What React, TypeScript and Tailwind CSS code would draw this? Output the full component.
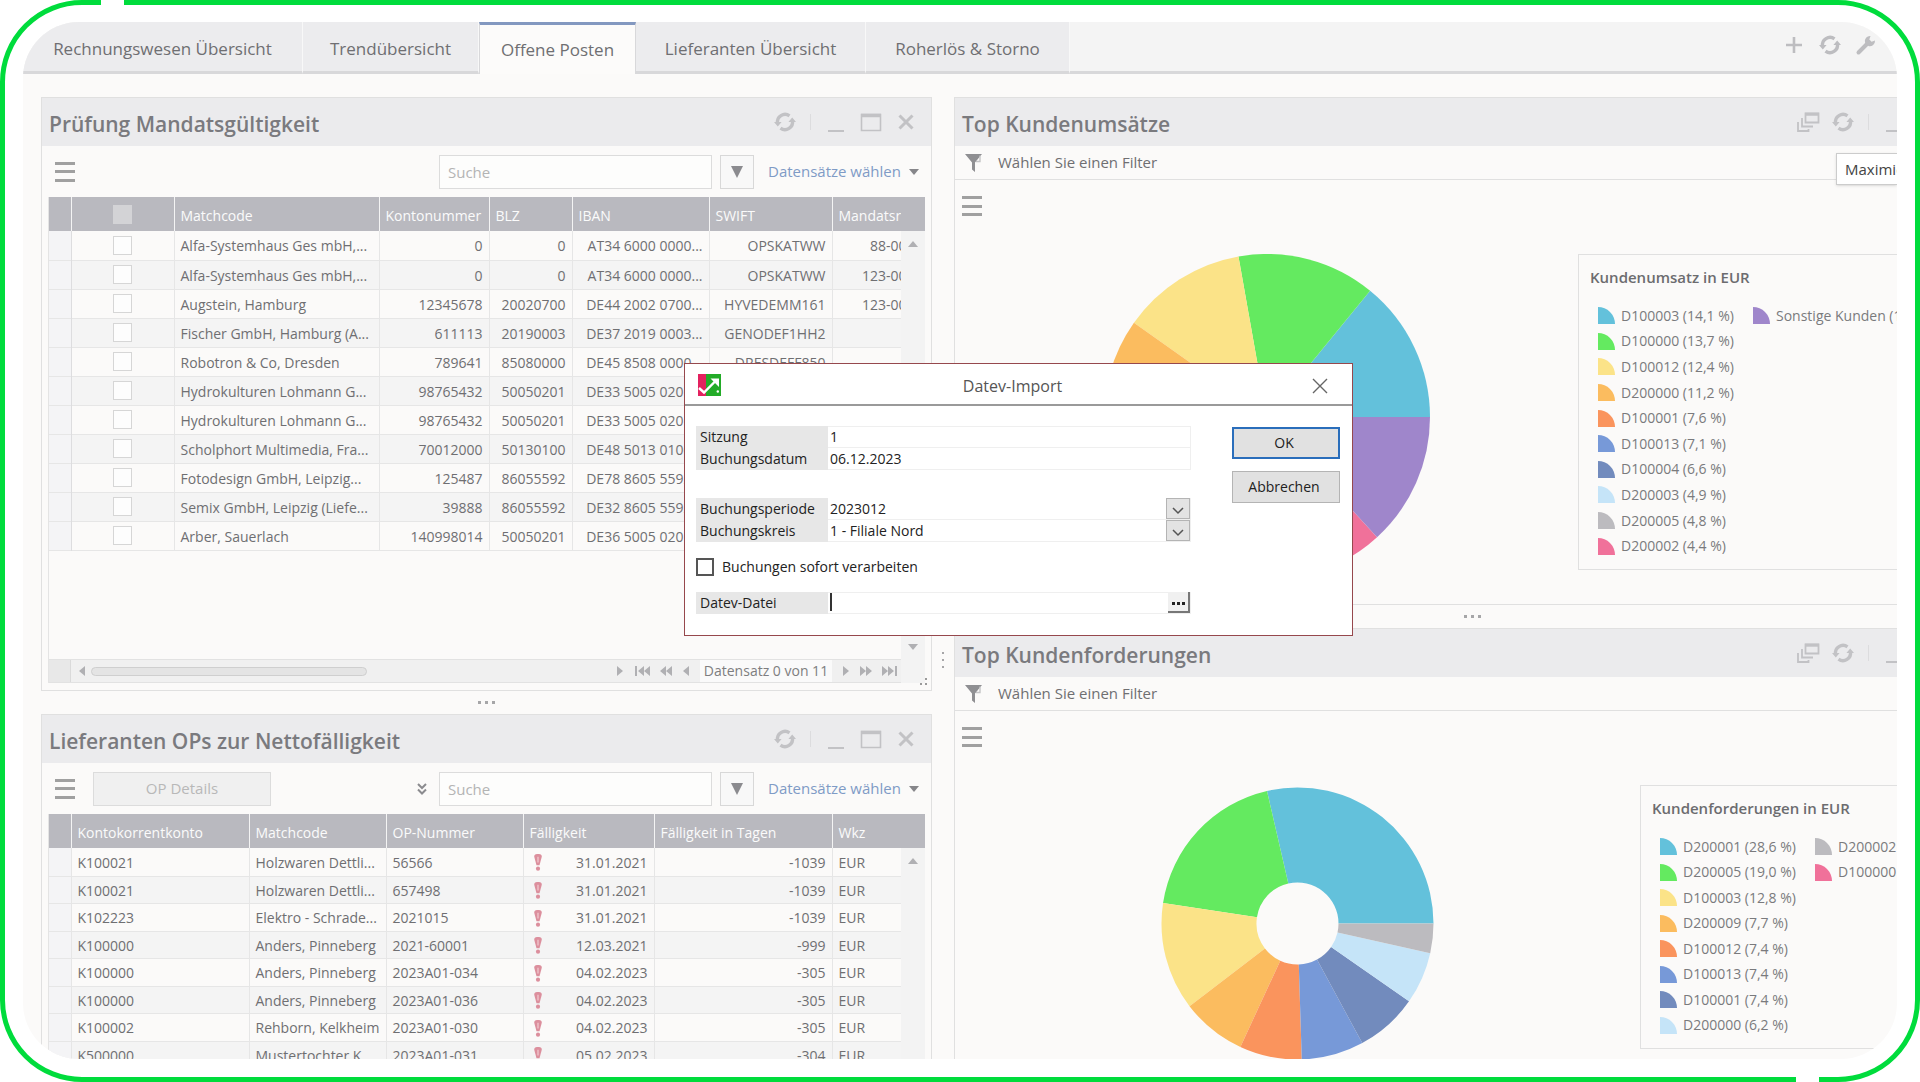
import { useState } from "react";
import type { ReactNode } from "react";

type Slice = { label: string; value: number; color: string };

const TABS = [
  { label: "Rechnungswesen Übersicht", width: "w-[280px]" },
  { label: "Trendübersicht", width: "w-[176px]" },
  { label: "Offene Posten", width: "w-[157px]" },
  { label: "Lieferanten Übersicht", width: "w-[230px]" },
  { label: "Roherlös & Storno", width: "w-[204px]" },
];

const MANDATE_COLUMNS = [
  { label: "Matchcode", width: "w-[205px]" },
  { label: "Kontonummer", width: "w-[110px]" },
  { label: "BLZ", width: "w-[83px]" },
  { label: "IBAN", width: "w-[137px]" },
  { label: "SWIFT", width: "w-[123px]" },
  { label: "Mandatsreferenz", width: "w-[129px]" },
];

const MANDATES = [
  ["Alfa-Systemhaus Ges mbH,...", "0", "0", "AT34 6000 0000...", "OPSKATWW", "88-00000001"],
  ["Alfa-Systemhaus Ges mbH,...", "0", "0", "AT34 6000 0000...", "OPSKATWW", "123-00000001"],
  ["Augstein, Hamburg", "12345678", "20020700", "DE44 2002 0700...", "HYVEDEMM161", "123-00000002"],
  ["Fischer GmbH, Hamburg (A...", "611113", "20190003", "DE37 2019 0003...", "GENODEF1HH2", ""],
  ["Robotron & Co, Dresden", "789641", "85080000", "DE45 8508 0000...", "DRESDEFF850", ""],
  ["Hydrokulturen Lohmann G...", "98765432", "50050201", "DE33 5005 0201...", "HELADEF1822", ""],
  ["Hydrokulturen Lohmann G...", "98765432", "50050201", "DE33 5005 0201...", "HELADEF1822", ""],
  ["Scholphort Multimedia, Fra...", "70012000", "50130100", "DE48 5013 0100...", "", ""],
  ["Fotodesign GmbH, Leipzig...", "125487", "86055592", "DE78 8605 5592...", "WELADE8LXXX", ""],
  ["Semix GmbH, Leipzig (Liefe...", "39888", "86055592", "DE32 8605 5592...", "WELADE8LXXX", ""],
  ["Arber, Sauerlach", "140998014", "50050201", "DE36 5005 0201...", "HELADEF1822", ""],
];

const SUPPLIER_COLUMNS = [
  { label: "Kontokorrentkonto", width: "w-[178px]" },
  { label: "Matchcode", width: "w-[137px]" },
  { label: "OP-Nummer", width: "w-[137px]" },
  { label: "Fälligkeit", width: "w-[131px]" },
  { label: "Fälligkeit in Tagen", width: "w-[178px]" },
  { label: "Wkz", width: "w-[69px]" },
];

const SUPPLIERS = [
  ["K100021", "Holzwaren Dettli...", "56566", "31.01.2021", "-1039"],
  ["K100021", "Holzwaren Dettli...", "657498", "31.01.2021", "-1039"],
  ["K102223", "Elektro - Schrade...", "2021015", "31.01.2021", "-1039"],
  ["K100000", "Anders, Pinneberg", "2021-60001", "12.03.2021", "-999"],
  ["K100000", "Anders, Pinneberg", "2023A01-034", "04.02.2023", "-305"],
  ["K100000", "Anders, Pinneberg", "2023A01-036", "04.02.2023", "-305"],
  ["K100002", "Rehborn, Kelkheim", "2023A01-030", "04.02.2023", "-305"],
  ["K500000", "Mustertochter K...", "2023A01-031", "05.02.2023", "-304"],
];

const REVENUE: Slice[] = [
  { label: "D100003 (14,1 %)", value: 14.1, color: "#63c1db" },
  { label: "D100000 (13,7 %)", value: 13.7, color: "#64ea60" },
  { label: "D100012 (12,4 %)", value: 12.4, color: "#fbe388" },
  { label: "D200000 (11,2 %)", value: 11.2, color: "#fbbc5f" },
  { label: "D100001 (7,6 %)", value: 7.6, color: "#fa945d" },
  { label: "D100013 (7,1 %)", value: 7.1, color: "#7799d8" },
  { label: "D100004 (6,6 %)", value: 6.6, color: "#728bbd" },
  { label: "D200003 (4,9 %)", value: 4.9, color: "#c5e4f8" },
  { label: "D200005 (4,8 %)", value: 4.8, color: "#bcbbbf" },
  { label: "D200002 (4,4 %)", value: 4.4, color: "#f0719a" },
  { label: "Sonstige Kunden (13,2 %)", value: 13.2, color: "#9f86cb" },
];

const RECEIVABLES: Slice[] = [
  { label: "D200001 (28,6 %)", value: 28.6, color: "#63c1db" },
  { label: "D200005 (19,0 %)", value: 19.0, color: "#64ea60" },
  { label: "D100003 (12,8 %)", value: 12.8, color: "#fbe388" },
  { label: "D200009 (7,7 %)", value: 7.7, color: "#fbbc5f" },
  { label: "D100012 (7,4 %)", value: 7.4, color: "#fa945d" },
  { label: "D100013 (7,4 %)", value: 7.4, color: "#7799d8" },
  { label: "D100001 (7,4 %)", value: 7.4, color: "#728bbd" },
  { label: "D200000 (6,2 %)", value: 6.2, color: "#c5e4f8" },
  { label: "D200002 (3,5 %)", value: 3.5, color: "#bcbbbf" },
  { label: "D100000 (0,0 %)", value: 0, color: "#f0719a" },
];

function RefreshIcon() {
  return (
    <svg viewBox="0 0 24 24" className="h-6 w-6" fill="none" stroke="currentColor" strokeWidth={3.4}>
      <path d="M4.6 13.5A7.6 7.6 0 0 1 16.5 5.9" />
      <path d="M19.4 10.5A7.6 7.6 0 0 1 7.5 18.1" />
      <path d="M1 12h7.6l-3.8 4.6z M23 12h-7.6l3.8-4.6z" fill="currentColor" stroke="none" />
    </svg>
  );
}

function CascadeIcon() {
  return (
    <svg viewBox="0 0 24 24" className="h-6 w-6" fill="none" stroke="currentColor" strokeWidth={1.8}>
      <path d="M9.5 3.5h13v9h-13z" />
      <path d="M9 4.2h14" strokeWidth={3} />
      <path d="M6 8v8.5h11M2 12v9h10.5v-2" />
    </svg>
  );
}

function MenuButton() {
  return (
    <button aria-label="Menü" className="flex h-5 w-5 flex-col justify-between text-[#a0a0a0]">
      <span className="h-[3px] w-full bg-current" />
      <span className="h-[3px] w-full bg-current" />
      <span className="h-[3px] w-full bg-current" />
    </button>
  );
}

function PanelHeader({ title, cascade = false }: { title: string; cascade?: boolean }) {
  return (
    <div className="flex h-12 shrink-0 items-center bg-[#ebebed] pr-[13px] pl-[7px]">
      <h2 className="mt-1 text-[21px] leading-7 font-semibold text-[#7a7a7e]">{title}</h2>
      <div className="ml-auto flex items-center gap-[11px] text-[#c2c2c5]">
        {cascade && (
          <button aria-label="Kaskadieren">
            <CascadeIcon />
          </button>
        )}
        <button aria-label="Aktualisieren">
          <RefreshIcon />
        </button>
        <span className="mx-[2px] h-4 w-px bg-[#dcdcde]" />
        <button aria-label="Minimieren">
          <svg viewBox="0 0 24 24" className="h-6 w-6" fill="currentColor">
            <path d="M4 20h16v2H4z" />
          </svg>
        </button>
        <button aria-label="Maximieren">
          <svg viewBox="0 0 24 24" className="h-6 w-6" fill="none" stroke="currentColor" strokeWidth={1.6}>
            <path d="M2.5 4.5h19v16h-19z" />
            <path d="M2 5.5h20" strokeWidth={3.4} />
          </svg>
        </button>
        <button aria-label="Schließen">
          <svg viewBox="0 0 24 24" className="h-6 w-6" fill="none" stroke="currentColor" strokeWidth={3}>
            <path d="M5.5 5.5l13 13M18.5 5.5l-13 13" />
          </svg>
        </button>
      </div>
    </div>
  );
}

function Toolbar({ id, children }: { id: string; children?: ReactNode }) {
  return (
    <div className="flex h-[51px] shrink-0 items-center pr-3 pl-[13px]">
      <MenuButton />
      {children}
      <label htmlFor={id} className="sr-only">
        Suche
      </label>
      <input
        id={id}
        type="text"
        placeholder="Suche"
        className={`h-[34px] w-[273px] border border-[#dcdcdc] bg-[#fdfdfc] px-2 text-[15px] placeholder:text-[#b4b4b4] ${
          children ? "ml-3" : "ml-auto"
        }`}
      />
      <button
        aria-label="Filter"
        className="ml-2 flex h-[34px] w-[34px] items-center justify-center border border-[#d8d8d8] bg-[#f8f8f8] text-[#8b8b8f]"
      >
        <svg viewBox="0 0 14 14" className="h-[14px] w-[14px]" fill="currentColor">
          <path d="M1 1h12L7 13z" />
        </svg>
      </button>
      <button className="ml-[14px] flex w-[151px] items-center justify-between text-[15px] whitespace-nowrap text-[#7f9bc6]">
        Datensätze wählen
        <svg viewBox="0 0 10 8" className="h-2 w-[10px] text-[#86868a]" fill="currentColor">
          <path d="M0 1h10L5 7z" />
        </svg>
      </button>
    </div>
  );
}

function HeadCell({ label, width }: { label: string; width: string }) {
  return (
    <th
      className={`h-[34px] overflow-hidden border-r border-[#f4f4f4] px-[6px] pt-1 pb-0 text-left font-normal text-[#fbfbfb] ${width}`}
    >
      {label}
    </th>
  );
}

function ScrollColumn({ down = false }: { down?: boolean }) {
  return (
    <div className="flex w-6 shrink-0 flex-col items-center bg-[#f3f3f3] text-[#b0b0b3]">
      <div className="h-[34px] w-full bg-[#b9b9bf]" />
      <svg viewBox="0 0 10 8" className="mt-[9px] h-2 w-[10px]" fill="currentColor">
        <path d="M0 7h10L5 1z" />
      </svg>
      {down && (
        <svg viewBox="0 0 10 8" className="mt-auto mb-8 h-2 w-[10px]" fill="currentColor">
          <path d="M0 1h10L5 7z" />
        </svg>
      )}
    </div>
  );
}

// left pointing glyphs are mirrored for the forward buttons
function PagerIcon({ count, bar = false, back = false }: { count: number; bar?: boolean; back?: boolean }) {
  return (
    <svg viewBox="0 0 16 12" className={`h-3 w-4 ${back ? "" : "-scale-x-100"}`} fill="currentColor">
      {bar && <path d="M0 1h2v10H0z" />}
      <path d={count === 2 ? "M9 1v10L3 6z M15 1v10L9 6z" : "M11 1v10L5 6z"} />
    </svg>
  );
}

function GridFooter() {
  return (
    <div className="mt-auto flex h-6 border-y border-[#e2e2e2] bg-[#f0f0f0] text-[#b0b0b3]">
      <div className="w-[22px] border-r border-[#dadada] bg-[#e8e8e8]" />
      <div className="flex flex-1 items-center gap-[6px] px-2">
        <svg viewBox="0 0 6 10" className="h-[10px] w-[6px]" fill="currentColor">
          <path d="M6 0v10L0 5z" />
        </svg>
        <div className="flex-1">
          <div className="h-[9px] w-[53%] rounded-full border border-[#cfcfcf] bg-[#e4e4e4]" />
        </div>
        <svg viewBox="0 0 6 10" className="h-[10px] w-[6px]" fill="currentColor">
          <path d="M0 0v10l6-5z" />
        </svg>
      </div>
      <div className="flex w-[270px] items-center justify-between pr-1 pl-1">
        <button aria-label="Erster Datensatz">
          <PagerIcon count={2} bar back />
        </button>
        <button aria-label="Vorherige Seite">
          <PagerIcon count={2} back />
        </button>
        <button aria-label="Vorheriger Datensatz">
          <PagerIcon count={1} back />
        </button>
        <span className="bg-[#fafafa] px-1 text-sm leading-[22px] whitespace-nowrap text-[#7e7e80]">
          Datensatz 0 von 11
        </span>
        <button aria-label="Nächster Datensatz">
          <PagerIcon count={1} />
        </button>
        <button aria-label="Nächste Seite">
          <PagerIcon count={2} />
        </button>
        <button aria-label="Letzter Datensatz">
          <PagerIcon count={2} bar />
        </button>
      </div>
    </div>
  );
}

function MandatePanel() {
  return (
    <section className="relative flex h-[594px] flex-col border border-[#e0e0e0]">
      <PanelHeader title="Prüfung Mandatsgültigkeit" />
      <Toolbar id="suche-mandate" />
      <div className="mx-[6px] mb-[7px] flex min-h-0 flex-1 border-l border-[#e4e4e4]">
        <div className="flex min-w-0 flex-1 flex-col overflow-hidden">
          <table className="w-[calc(100%+60px)] table-fixed border-collapse text-sm whitespace-nowrap text-[#6f6f72]">
            <thead>
              <tr className="bg-[#b9b9bf]">
                <th className="w-[22px] border-r border-[#f4f4f4]" />
                <th className="w-[103px] border-r border-[#f4f4f4]">
                  <input
                    type="checkbox"
                    aria-label="Alle auswählen"
                    className="mx-auto block h-[19px] w-[19px] appearance-none bg-[#d3d3d6]"
                  />
                </th>
                {MANDATE_COLUMNS.map((c) => (
                  <HeadCell key={c.label} {...c} />
                ))}
              </tr>
            </thead>
            <tbody>
              {MANDATES.map((row, i) => (
                <tr key={i} className="h-[29px] border-b border-[#e6e6e6] even:bg-[#f4f4f4]">
                  <td className="border-r border-[#dddddf] bg-[#f4f4f6]" />
                  <td className="border-r border-[#e6e6e6]">
                    <input
                      type="checkbox"
                      aria-label={row[0]}
                      className="mx-auto block h-[19px] w-[19px] appearance-none border border-[#d6d6d6] bg-[#fdfdfd]"
                    />
                  </td>
                  {row.map((cell, j) => (
                    <td
                      key={j}
                      className={`overflow-hidden border-r border-[#e6e6e6] px-[6px] pt-[2px] pb-0 leading-[26px] ${
                        j === 0 ? "text-left" : "text-right"
                      }`}
                    >
                      {cell}
                    </td>
                  ))}
                </tr>
              ))}
            </tbody>
          </table>
          <GridFooter />
        </div>
        <ScrollColumn down />
      </div>
      <svg viewBox="0 0 8 8" className="absolute right-1 bottom-1 h-2 w-2 text-[#9a9a9a]" fill="currentColor">
        <path d="M6 0h2v2H6zM6 5h2v2H6zM1 5h2v2H1z" />
      </svg>
    </section>
  );
}

function SupplierPanel() {
  return (
    <section className="flex flex-col border border-[#e0e0e0]">
      <PanelHeader title="Lieferanten OPs zur Nettofälligkeit" />
      <Toolbar id="suche-lieferanten">
        <button
          disabled
          className="ml-[18px] h-[34px] w-[178px] border border-[#dcdcdc] bg-[#f0f0f0] text-[15px] text-[#b8b8b8]"
        >
          OP Details
        </button>
        <button aria-label="Mehr" className="ml-auto text-[#8b8b8f]">
          <svg viewBox="0 0 10 12" className="h-3 w-[10px]" fill="none" stroke="currentColor" strokeWidth={2}>
            <path d="M1 1l4 4 4-4M1 6.5l4 4 4-4" />
          </svg>
        </button>
      </Toolbar>
      <div className="mx-[6px] flex border-l border-[#e4e4e4]">
        <div className="min-w-0 flex-1">
          <table className="w-full table-fixed border-collapse text-sm whitespace-nowrap text-[#6f6f72]">
            <thead>
              <tr className="bg-[#b9b9bf]">
                <th className="w-[22px] border-r border-[#f4f4f4]" />
                {SUPPLIER_COLUMNS.map((c) => (
                  <HeadCell key={c.label} {...c} />
                ))}
              </tr>
            </thead>
            <tbody>
              {SUPPLIERS.map(([account, match, number, due, days], i) => (
                <tr
                  key={i}
                  className="border-b border-[#e6e6e6] *:border-r *:border-[#e6e6e6] *:px-[6px] *:pt-[2px] *:pb-0 odd:h-7 even:h-[27px] even:bg-[#f4f4f4]"
                >
                  <td className="bg-[#f4f4f6]" />
                  <td>{account}</td>
                  <td>{match}</td>
                  <td>{number}</td>
                  <td>
                    <div className="flex items-center justify-between pl-1">
                      <svg viewBox="0 0 8 18" className="h-[17px] w-2 text-[#dc8f9d]" fill="currentColor">
                        <path d="M0 3a3 3 0 0 1 3-3h2a3 3 0 0 1 3 3L5.6 12H2.4z" />
                        <circle cx="4" cy="15.5" r="2.2" />
                        <path d="M3.4 3h1.2v6H3.4z" fill="#f3cfd5" />
                      </svg>
                      <span>{due}</span>
                    </div>
                  </td>
                  <td className="text-right">{days}</td>
                  <td>EUR</td>
                </tr>
              ))}
            </tbody>
          </table>
        </div>
        <ScrollColumn />
      </div>
    </section>
  );
}

function Pie({ slices, size, radius, hole = 0 }: { slices: Slice[]; size: number; radius: number; hole?: number }) {
  const total = slices.reduce((sum, s) => sum + s.value, 0);
  const c = size / 2;
  const at = (r: number, a: number) => `${c + r * Math.cos(a)} ${c - r * Math.sin(a)}`;

  let angle = 0;
  const paths = slices
    .filter((s) => s.value > 0)
    .map((s) => {
      const start = angle;
      angle += (s.value / total) * Math.PI * 2;
      const d = `M${at(hole, start)} L${at(radius, start)} A${radius} ${radius} 0 0 0 ${at(radius, angle)} L${at(hole, angle)} A${hole} ${hole} 0 0 1 ${at(hole, start)}Z`;
      return <path key={s.label} d={d} fill={s.color} />;
    });

  return (
    <svg width={size} height={size} viewBox={`0 0 ${size} ${size}`} className="shrink-0">
      {paths}
    </svg>
  );
}

function Legend({ title, slices, rows }: { title: string; slices: Slice[]; rows: string }) {
  return (
    <div className="w-[400px] shrink-0 border border-[#e0e0e0] pt-[10px] pb-[10px] pl-[11px]">
      <h3 className="text-[15px] leading-6 font-semibold text-[#6c6c6f]">{title}</h3>
      <ul className={`mt-[14px] ml-2 grid auto-cols-[155px] grid-flow-col ${rows}`}>
        {slices.map((s) => (
          <li key={s.label} className="flex items-center gap-[6px] text-sm leading-6 whitespace-nowrap text-[#7a7a7d]">
            <svg viewBox="0 0 17 17" className="h-[17px] w-[17px] shrink-0">
              <path d="M0 0a17 17 0 0 1 17 17H0z" fill={s.color} />
            </svg>
            {s.label}
          </li>
        ))}
      </ul>
    </div>
  );
}

function ChartPanel({ title, children }: { title: string; children: ReactNode }) {
  return (
    <section className="border border-[#e0e0e0]">
      <PanelHeader title={title} cascade />
      <div className="flex h-[34px] items-center gap-4 border-b border-[#e0e0e0] pl-[10px] text-[15px] text-[#6f6f72]">
        <svg viewBox="0 0 17 18" className="h-[18px] w-[17px] text-[#8f8f92]" fill="currentColor">
          <path d="M0 0h17L10 8.5V18l-3-2.5v-7z" />
          <path d="M15 1.5v6h-4" fill="none" stroke="#c4c4c6" strokeWidth={1.4} />
        </svg>
        Wählen Sie einen Filter
      </div>
      <div className="pt-4 pl-[7px]">
        <MenuButton />
      </div>
      {children}
    </section>
  );
}

function Dots() {
  return (
    <div className="flex h-[23px] items-center justify-center gap-[4px] *:h-[3px] *:w-[3px] *:bg-[#a6a6a8]">
      <i />
      <i />
      <i />
    </div>
  );
}

function FieldRow({ id, label, children }: { id: string; label: string; children: ReactNode }) {
  return (
    <div className="flex h-[22px] items-stretch">
      <label htmlFor={id} className="w-[132px] bg-[#e7e7e7] pl-1 leading-[22px]">
        {label}
      </label>
      <div className="relative flex flex-1 border-r border-b border-[#efefef]">{children}</div>
    </div>
  );
}

function ComboField({ id, label, value }: { id: string; label: string; value: string }) {
  return (
    <FieldRow id={id} label={label}>
      <select id={id} className="w-full appearance-none pl-[2px] leading-5">
        <option>{value}</option>
      </select>
      <span className="pointer-events-none absolute top-0 right-0 flex h-[21px] w-6 items-center justify-center border border-[#b4b4b4] bg-[#e3e3e3] pt-1">
        <svg viewBox="0 0 12 8" className="h-2 w-3" fill="none" stroke="#555" strokeWidth={1.5}>
          <path d="M1 1l5 5 5-5" />
        </svg>
      </span>
    </FieldRow>
  );
}

function ImportDialog() {
  const [session, setSession] = useState("1");
  const [date, setDate] = useState("06.12.2023");
  const [immediate, setImmediate] = useState(false);

  return (
    <div
      role="dialog"
      aria-label="Datev-Import"
      className="absolute top-[341px] left-[661px] w-[669px] border border-[#96484d] bg-white pb-[21px] text-sm text-[#222]"
    >
      <div className="relative flex h-[42px] items-center justify-center border-b-2 border-[#9a9a9a] pt-1">
        <svg viewBox="0 0 23 22" className="absolute top-[10px] left-[13px] h-[22px] w-[23px]">
          <path d="M0 0h8v22H0z" fill="#e3215f" />
          <path d="M8 0h15v22H8z" fill="#23ab28" />
          <path d="M1 14l5 4.5L18.5 6" fill="none" stroke="#fff" strokeWidth={2.4} />
          <path d="M12.5 4.5H21V13z" fill="#fff" />
          <circle cx="19.8" cy="17.5" r="1.2" fill="#fff" />
        </svg>
        <span className="pr-3 text-base text-[#555]">Datev-Import</span>
        <button aria-label="Dialog schließen" className="absolute right-6">
          <svg viewBox="0 0 16 16" className="h-4 w-4" fill="none" stroke="#666" strokeWidth={1.4}>
            <path d="M1 1l14 14M15 1L1 15" />
          </svg>
        </button>
      </div>

      <div className="flex justify-between pt-5 pr-[12px] pl-[11px]">
        <div className="w-[495px]">
          <FieldRow id="sitzung" label="Sitzung">
            <input
              id="sitzung"
              value={session}
              onChange={(e) => setSession(e.target.value)}
              className="w-full border-t border-[#efefef] pl-[2px]"
            />
          </FieldRow>
          <FieldRow id="datum" label="Buchungsdatum">
            <input id="datum" value={date} onChange={(e) => setDate(e.target.value)} className="w-full pl-[2px]" />
          </FieldRow>
          <div className="mt-7">
            <ComboField id="periode" label="Buchungsperiode" value="2023012" />
            <ComboField id="kreis" label="Buchungskreis" value="1 - Filiale Nord" />
          </div>
          <div className="my-[14px] flex h-[22px] items-center gap-2">
            <input
              id="sofort"
              type="checkbox"
              checked={immediate}
              onChange={(e) => setImmediate(e.target.checked)}
              className="h-[18px] w-[18px] appearance-none border-2 border-[#555] bg-white checked:bg-[#555]"
            />
            <label htmlFor="sofort">Buchungen sofort verarbeiten</label>
          </div>
          <FieldRow id="datei" label="Datev-Datei">
            <input id="datei" className="w-full border-t border-[#efefef] pl-[2px]" />
            <span className="absolute top-[1px] left-[2px] h-[18px] w-[2px] bg-[#333]" />
            <button
              aria-label="Durchsuchen"
              className="absolute top-0 right-0 flex h-[21px] w-[22px] items-end justify-center gap-[2px] border-r-2 border-b-2 border-[#777] bg-[#f0f0f0] pb-[6px] *:h-[3px] *:w-[3px] *:bg-[#222]"
            >
              <i />
              <i />
              <i />
            </button>
          </FieldRow>
        </div>
        <div className="flex w-[108px] flex-col gap-3 pt-px">
          <button className="h-8 border-2 border-[#2a6ebb] bg-[#e1e1e1] pr-1">OK</button>
          <button className="h-8 border border-[#b4b4b4] bg-[#e1e1e1] pr-1">Abbrechen</button>
        </div>
      </div>
    </div>
  );
}

function App() {
  const [active, setActive] = useState(2);

  return (
    <div className="relative h-screen rounded-[82px] border-[5px] border-[#00dc3c] bg-white px-[18px] pt-[17px] pb-[18px] font-['Open_Sans','Noto_Sans',sans-serif]">
      <span className="absolute -top-[5px] left-24 h-[5px] w-[23px] bg-white" />
      <span className="absolute right-24 -bottom-[5px] h-[5px] w-[23px] bg-white" />

      <div className="relative h-full overflow-hidden rounded-[56px] bg-[#fbfaf9]">
        <nav className="flex bg-[#f4f4f4] text-[17px] text-[#6f6f72]">
          {TABS.map((tab, i) => (
            <button
              key={tab.label}
              onClick={() => setActive(i)}
              className={`h-[52px] whitespace-nowrap ${tab.width} ${
                i === active
                  ? "border-x border-t-[3px] border-x-[#d8d8da] border-t-[#8398c0] bg-[#fcfbfa]"
                  : "border-r border-b-[3px] border-r-[#f8f8f8] border-b-[#d8d8da] bg-[#ececee] pt-1"
              }`}
            >
              {tab.label}
            </button>
          ))}
          <div className="flex flex-1 items-center justify-end gap-3 border-b-[3px] border-[#d8d8da] pr-[19px] pb-1 text-[#bdbdc0]">
            <button aria-label="Hinzufügen">
              <svg viewBox="0 0 24 24" className="h-6 w-6" fill="none" stroke="currentColor" strokeWidth={2.6}>
                <path d="M12 4v16M4 12h16" />
              </svg>
            </button>
            <button aria-label="Aktualisieren">
              <RefreshIcon />
            </button>
            <button aria-label="Einstellungen">
              <svg viewBox="0 0 24 24" className="h-6 w-6" fill="none" stroke="currentColor">
                <path d="M4.5 19.5l9-9" strokeWidth={4} strokeLinecap="round" />
                <path
                  d="M21 7.5l-3.4 1.2-2.3-2.3L16.5 3a5.2 5.2 0 0 0-5.5 6.5l3.5 3.5A5.2 5.2 0 0 0 21 7.5z"
                  fill="currentColor"
                  stroke="none"
                />
              </svg>
            </button>
          </div>
        </nav>

        <div className="grid grid-cols-[891fr_22px_943fr] pt-[23px] pl-[18px]">
          <div className="min-w-0">
            <MandatePanel />
            <Dots />
            <SupplierPanel />
          </div>
          <div className="flex flex-col items-center gap-[5px] pt-[555px] *:h-[2px] *:w-[2px] *:bg-[#a6a6a8]">
            <i />
            <i />
            <i />
          </div>
          <div className="min-w-0">
            <div className="w-[calc(100%+93px)]">
              <ChartPanel title="Top Kundenumsätze">
                <div className="flex items-start gap-[148px] pt-[38px] pb-6 pl-[149px]">
                  <Pie slices={REVENUE} size={326} radius={163} />
                  <Legend title="Kundenumsatz in EUR" slices={REVENUE} rows="grid-rows-10 h-64" />
                </div>
              </ChartPanel>
              <Dots />
              <ChartPanel title="Top Kundenforderungen">
                <div className="flex items-start gap-[204px] pt-[38px] pl-[204px]">
                  <Pie slices={RECEIVABLES} size={277} radius={136} hole={41} />
                  <Legend title="Kundenforderungen in EUR" slices={RECEIVABLES} rows="grid-rows-8 h-[204px]" />
                </div>
              </ChartPanel>
            </div>
          </div>
        </div>

        <div
          role="tooltip"
          className="absolute top-[131px] right-0 w-[61px] overflow-hidden border border-r-0 border-[#cccccc] bg-white pl-2 text-[15px] leading-[30px] text-[#444] shadow"
        >
          Maximieren
        </div>

        <ImportDialog />
      </div>
    </div>
  );
}

export default App;
